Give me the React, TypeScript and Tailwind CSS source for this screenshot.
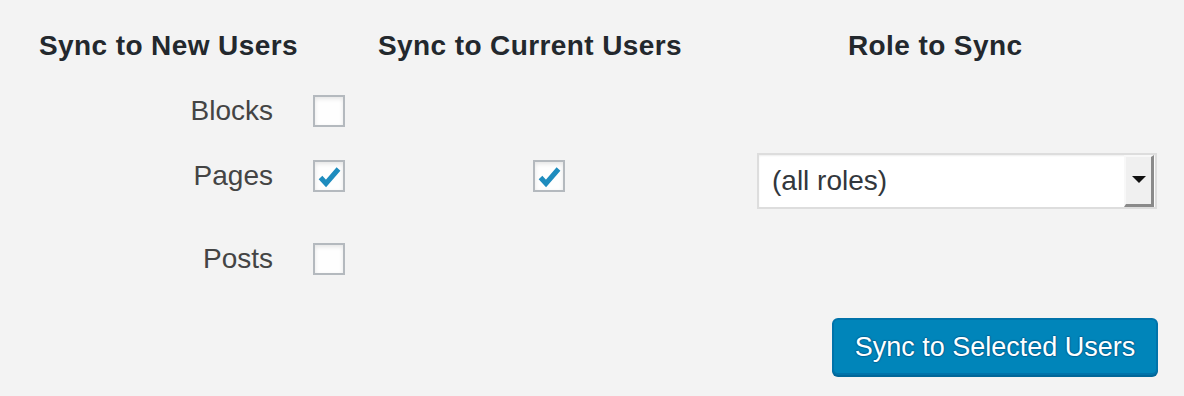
const font = { fontFamily: '"Liberation Sans", Arial, sans-serif' };

function Box({ checked }: { checked?: boolean }) {
  return (
    <span className="flex h-[32px] w-[32px] items-center justify-center border-2 border-[#b4b9be] bg-[#fefefe] shadow-[inset_0_2px_4px_rgba(0,0,0,0.1)]">
      {checked && (
        <svg width="28" height="28" viewBox="0 0 28 28" className="-mt-[1px]">
          <polyline
            points="5.5,15.5 11,21.5 23.5,7"
            fill="none"
            stroke="#1e8cbe"
            strokeWidth="5"
            strokeLinejoin="miter"
          />
        </svg>
      )}
    </span>
  );
}

function Row({ label, h, checked, current, select }: { label: string; h: string; checked?: boolean; current?: boolean; select?: boolean }) {
  return (
    <div className={`grid grid-cols-[273px_72px_221px_1fr] items-center ${h}`}>
      <span className="text-right text-[28px] leading-[32px] text-[#444]">{label}</span>
      <span className="pl-[40px]">
        <Box checked={checked} />
      </span>
      <span className="pl-[188px]">{current && <Box checked />}</span>
      <span className="pl-[191px]">
        {select && (
          <div className="mt-[9px] flex h-[56px] w-[400px] items-center border-2 border-[#dddddd] bg-white pr-[1px] shadow-[inset_0_1px_2px_rgba(0,0,0,0.07)]">
            <span className="flex-1 pl-[13px] text-[28px] leading-[32px] text-[#32373c]">(all roles)</span>
            <span className="flex h-[52px] w-[30px] items-center justify-center border-t-2 border-l-2 border-r-[3px] border-b-[3px] border-t-[#f8f8f8] border-l-[#f8f8f8] border-r-[#8a8a8a] border-b-[#8a8a8a] bg-[#f0f0f0]">
              <svg width="14" height="8" viewBox="0 0 14 8">
                <polygon points="0,0 14,0 7,7" fill="#111" />
              </svg>
            </span>
          </div>
        )}
      </span>
    </div>
  );
}

export default function App() {
  return (
    <div style={font} className="h-[396px] w-[1184px] overflow-hidden bg-[#f3f3f3]">
      <div className="grid grid-cols-[339px_470px_1fr] pl-[39px] pt-[30px] text-[28px] font-bold leading-[32px] tracking-[0.4px] text-[#23282d]">
        <span>Sync to New Users</span>
        <span>Sync to Current Users</span>
        <span>Role to Sync</span>
      </div>
      <div className="mt-[17px]">
        <Row label="Blocks" h="h-[64px]" />
        <Row label="Pages" h="h-[66px]" checked current select />
        <Row label="Posts" h="h-[100px]" />
      </div>
      <div className="flex justify-end pr-[26px] pt-[9px]">
        <button className="h-[57px] w-[326px] rounded-[6px] border-2 border-[#0073aa] bg-[#0085ba] text-[27px] leading-[32px] text-white shadow-[0_2px_0_#006799] [text-shadow:0_-1px_1px_#006799,1px_0_1px_#006799,0_1px_1px_#006799,-1px_0_1px_#006799]">
          Sync to Selected Users
        </button>
      </div>
    </div>
  );
}
